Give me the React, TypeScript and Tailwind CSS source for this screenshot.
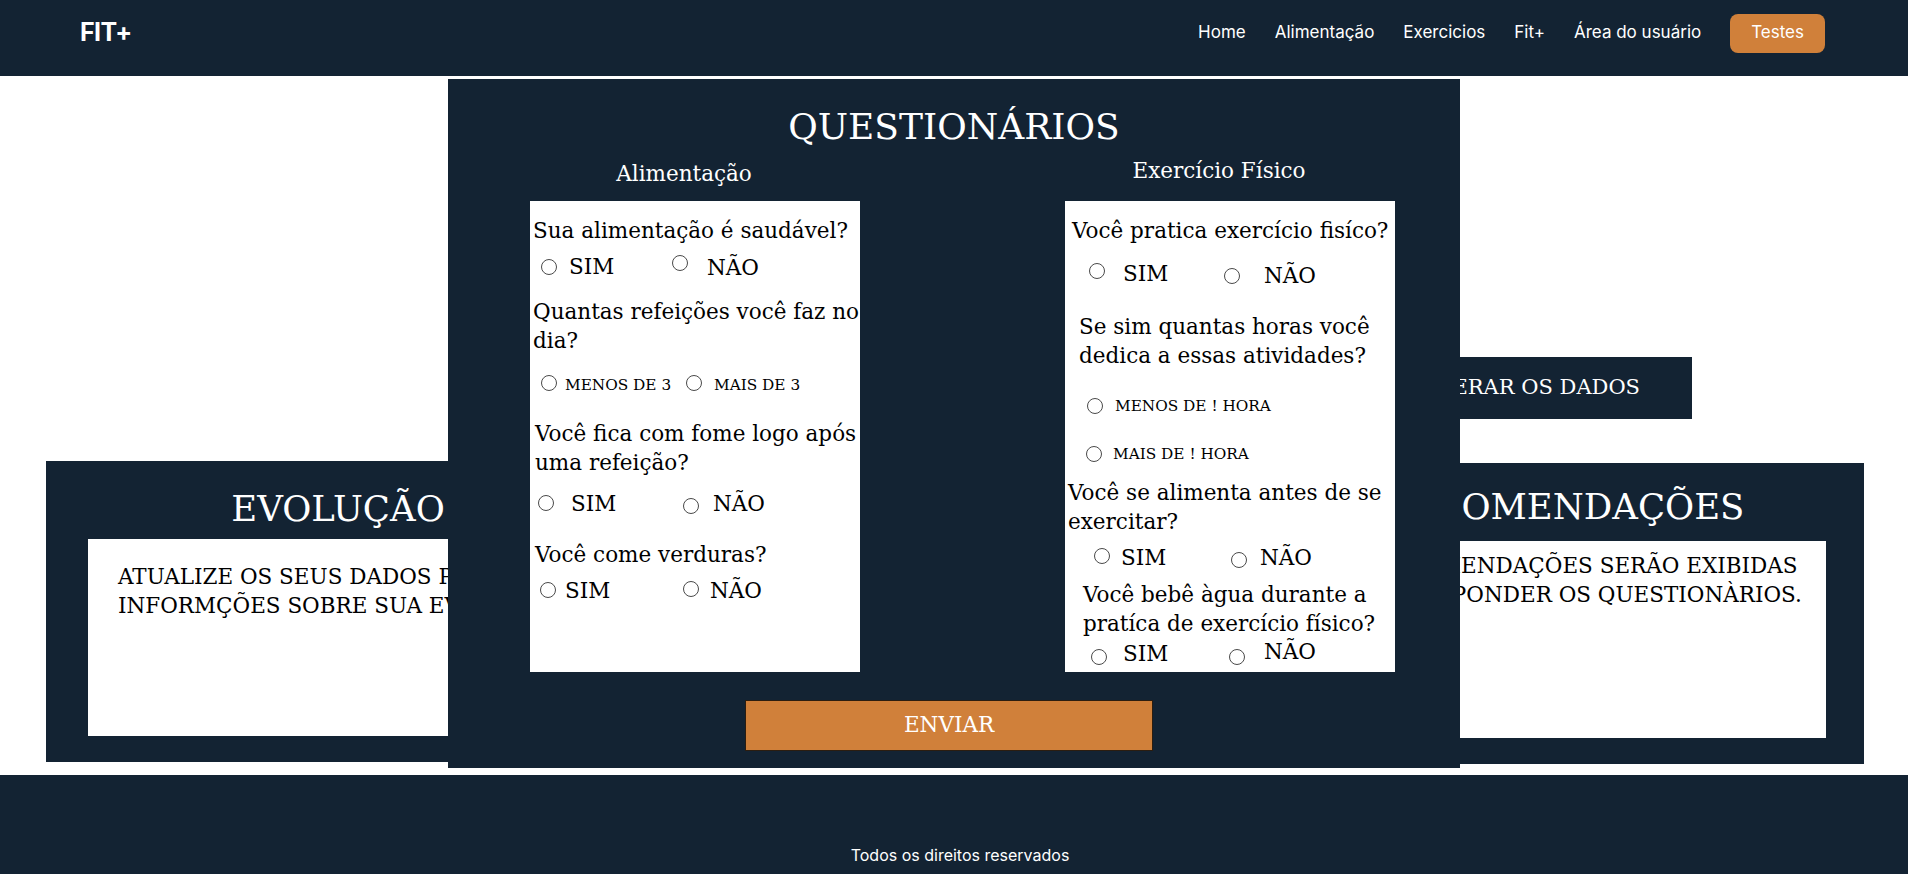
import React from "react";

const serif = "font-['DejaVu_Serif',serif]";

function Radio({ className }: { className: string }) {
  return (
    <span
      className={
        "block w-4 h-4 shrink-0 rounded-full border border-[#4a4a4a] bg-white " +
        className
      }
    />
  );
}

function Q({ className, children }: { className: string; children: React.ReactNode }) {
  return (
    <div className={"text-[21.5px] leading-[29px] whitespace-nowrap " + className}>
      {children}
    </div>
  );
}

export default function App() {
  return (
    <div className={"relative min-h-screen bg-white " + serif}>
      {/* Header */}
      <header className="h-[76px] bg-[#132333] font-['Inter',sans-serif] text-white">
        <div className="flex h-[66px] items-center justify-between pl-[80px] pr-[83px]">
          <div className="text-[25px] font-bold tracking-tight">FIT+</div>
          <nav className="flex items-center gap-[29px] text-[17px]">
            <a>Home</a>
            <a>Alimentação</a>
            <a>Exercicios</a>
            <a>Fit+</a>
            <a>Área do usuário</a>
            <a className="flex h-[39px] items-center rounded-lg bg-[#d0803a] px-[21px]">Testes</a>
          </nav>
        </div>
      </header>

      {/* Area above panels */}
      <section className="flex h-[385px] items-start justify-end pr-[216px] pt-[281px]">
        <button className="flex h-[62px] items-center bg-[#132333] px-[52px] text-[21px] text-white">
          ALTERAR OS DADOS
        </button>
      </section>

      {/* Panels */}
      <section className="flex items-start justify-between pl-[46px] pr-[44px] pb-[11px]">
        <div className="flex w-[584px] flex-col bg-[#132333] pt-[27px] pb-[26px]">
          <h2 className="text-center text-[35.5px] leading-[42px] text-white">EVOLUÇÃO</h2>
          <div className="mt-[9px] ml-[42px] mr-[38px] h-[197px] whitespace-nowrap bg-white pt-[23px] pl-[30px] text-[21.5px] leading-[29px] text-black">
            ATUALIZE OS SEUS DADOS PARA VER
            <br />
            INFORMÇÕES SOBRE SUA EVOLUÇÃO.
          </div>
        </div>
        <div className="mt-[2px] flex w-[584px] flex-col bg-[#132333] pt-[23px] pb-[26px]">
          <h2 className="pr-[18px] text-center text-[35.5px] leading-[42px] text-white">RECOMENDAÇÕES</h2>
          <div className="mt-[13px] ml-[42px] mr-[38px] h-[197px] whitespace-nowrap bg-white pt-[10px] pl-[14px] text-[21.5px] leading-[29px] text-black">
            AS RECOMENDAÇÕES SERÃO EXIBIDAS
            <br />
            APÓS RESPONDER OS QUESTIONÀRIOS.
          </div>
        </div>
      </section>

      {/* Footer */}
      <footer className="bg-[#132333] pt-[68px] pb-[40px] pl-[12px] text-center font-['Inter',sans-serif] text-[16px] leading-[24px] text-white">
        Todos os direitos reservados
      </footer>

      {/* Modal */}
      <div className="absolute left-1/2 top-[79px] flex h-[689px] w-[1012px] -translate-x-1/2 flex-col bg-[#132333] pt-[27px]">
        <h1 className="text-center text-[36px] leading-[42px] text-white">QUESTIONÁRIOS</h1>
        <div className="flex gap-[205px] pl-[82px]">
          {/* Alimentação */}
          <div className="flex w-[330px] flex-col">
            <div className="flex h-[53px] flex-col pr-[22px] text-center text-white">
              <div className="mt-[13px] text-[21.5px] leading-[26px]">Alimentação</div>
            </div>
            <div className="flex h-[471px] flex-col bg-white pt-[15px] text-black">
              <Q className="pl-[3px]">Sua alimentação é saudável?</Q>
              <div className="flex h-[52px] text-[21.5px] leading-[26px]">
                <div className="flex w-[142px] items-start">
                  <Radio className="ml-[11px] mt-[14px]" />
                  <span className="ml-[12px] mt-[9px]">SIM</span>
                </div>
                <div className="flex items-start">
                  <Radio className="mt-[10px]" />
                  <span className="ml-[19px] mt-[10px]">NÃO</span>
                </div>
              </div>
              <Q className="pl-[3px]">
                Quantas refeições você faz no
                <br />
                dia?
              </Q>
              <div className="flex h-[64px] text-[15.3px] leading-[19px]">
                <div className="flex w-[156px] items-start">
                  <Radio className="ml-[11px] mt-[20px]" />
                  <span className="ml-[8px] mt-[21px]">MENOS DE 3</span>
                </div>
                <div className="flex items-start">
                  <Radio className="mt-[20px]" />
                  <span className="ml-[12px] mt-[21px]">MAIS DE 3</span>
                </div>
              </div>
              <Q className="pl-[5px]">
                Você fica com fome logo após
                <br />
                uma refeição?
              </Q>
              <div className="flex h-[63px] text-[21.5px] leading-[26px]">
                <div className="flex w-[153px] items-start">
                  <Radio className="ml-[8px] mt-[18px]" />
                  <span className="ml-[17px] mt-[14px]">SIM</span>
                </div>
                <div className="flex items-start">
                  <Radio className="mt-[21px]" />
                  <span className="ml-[14px] mt-[14px]">NÃO</span>
                </div>
              </div>
              <Q className="pl-[5px]">Você come verduras?</Q>
              <div className="flex text-[21.5px] leading-[26px]">
                <div className="flex w-[153px] items-start">
                  <Radio className="ml-[10px] mt-[13px]" />
                  <span className="ml-[9px] mt-[9px]">SIM</span>
                </div>
                <div className="flex items-start">
                  <Radio className="mt-[12px]" />
                  <span className="ml-[11px] mt-[9px]">NÃO</span>
                </div>
              </div>
            </div>
          </div>

          {/* Exercício Físico */}
          <div className="flex w-[330px] flex-col">
            <div className="flex h-[53px] flex-col pr-[22px] text-center text-white">
              <div className="mt-[10px] text-[21.5px] leading-[26px]">Exercício Físico</div>
            </div>
            <div className="flex h-[471px] flex-col bg-white pt-[15px] text-black">
              <Q className="pl-[7px]">Você pratica exercício fisíco?</Q>
              <div className="flex h-[67px] text-[21.5px] leading-[26px]">
                <div className="flex w-[159px] items-start">
                  <Radio className="ml-[24px] mt-[18px]" />
                  <span className="ml-[18px] mt-[16px]">SIM</span>
                </div>
                <div className="flex items-start">
                  <Radio className="mt-[23px]" />
                  <span className="ml-[24px] mt-[18px]">NÃO</span>
                </div>
              </div>
              <Q className="pl-[14px]">
                Se sim quantas horas você
                <br />
                dedica a essas atividades?
              </Q>
              <div className="flex h-[60px] items-start text-[15.3px] leading-[19px]">
                <Radio className="ml-[22px] mt-[28px]" />
                <span className="ml-[12px] mt-[27px]">MENOS DE ! HORA</span>
              </div>
              <div className="flex h-[48px] items-start text-[15.3px] leading-[19px]">
                <Radio className="ml-[21px] mt-[16px]" />
                <span className="ml-[11px] mt-[15px]">MAIS DE ! HORA</span>
              </div>
              <Q className="pl-[3px]">
                Você se alimenta antes de se
                <br />
                exercitar?
              </Q>
              <div className="flex h-[44px] text-[21.5px] leading-[26px]">
                <div className="flex w-[166px] items-start">
                  <Radio className="ml-[29px] mt-[12px]" />
                  <span className="ml-[11px] mt-[9px]">SIM</span>
                </div>
                <div className="flex items-start">
                  <Radio className="mt-[16px]" />
                  <span className="ml-[13px] mt-[9px]">NÃO</span>
                </div>
              </div>
              <Q className="pl-[18px]">
                Você bebê àgua durante a
                <br />
                pratíca de exercício físico?
              </Q>
              <div className="flex text-[21.5px] leading-[26px]">
                <div className="flex w-[164px] items-start">
                  <Radio className="ml-[26px] mt-[11px]" />
                  <span className="ml-[16px] mt-[3px]">SIM</span>
                </div>
                <div className="flex items-start">
                  <Radio className="mt-[11px]" />
                  <span className="ml-[19px] mt-[1px]">NÃO</span>
                </div>
              </div>
            </div>
          </div>
        </div>
        <button className="mt-[28px] ml-[297px] flex h-[51px] w-[408px] items-center justify-center border border-[#2b1d10] bg-[#d0803a] text-[21.5px] text-white">
          ENVIAR
        </button>
      </div>
    </div>
  );
}
